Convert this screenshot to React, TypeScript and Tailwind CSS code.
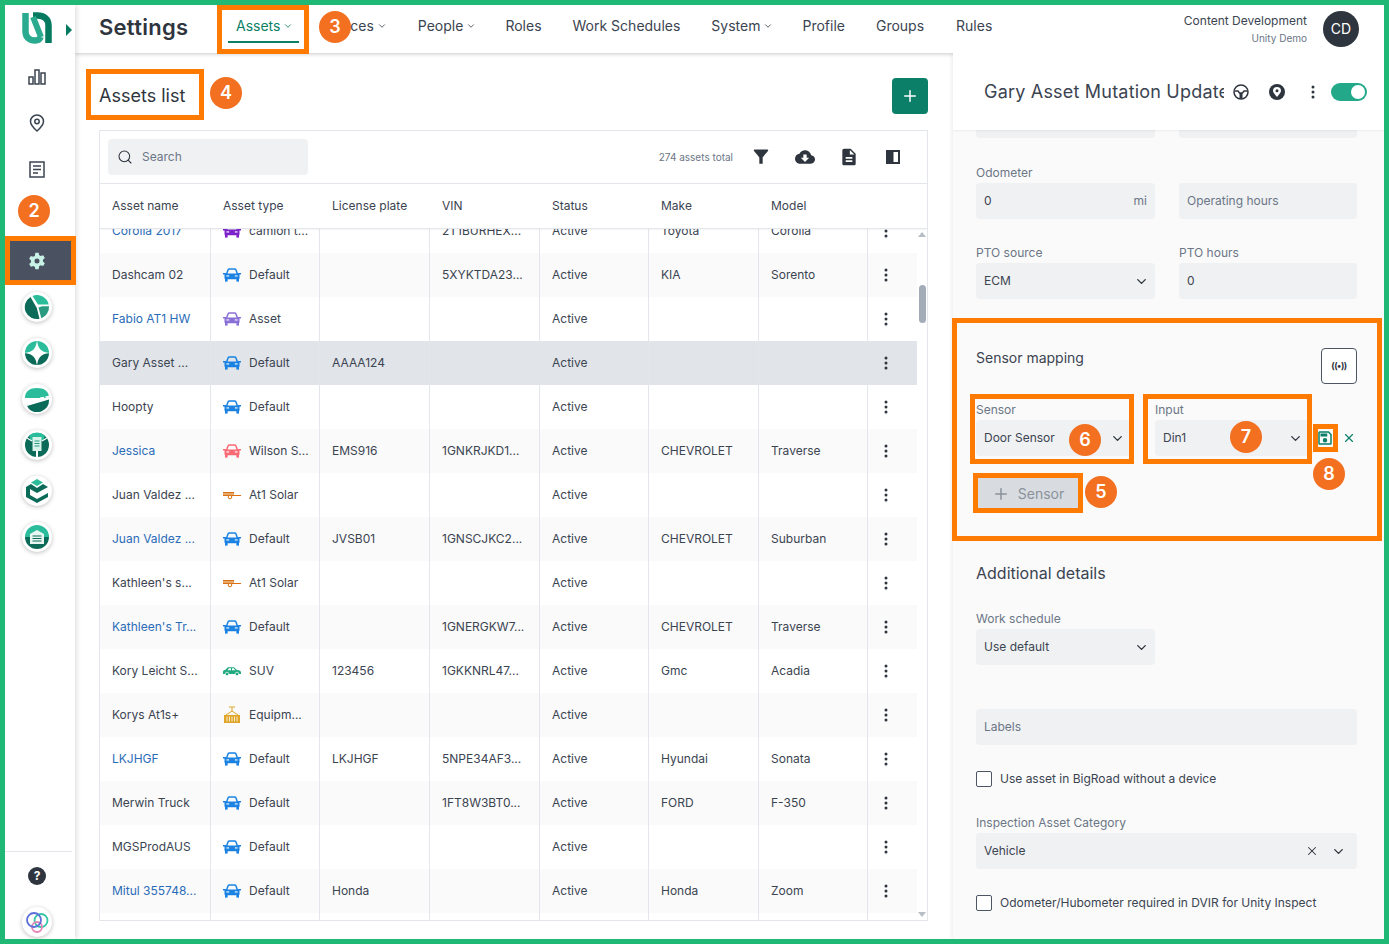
import { ChevronDown, Plus, Search, X } from 'lucide-react'
import type { ReactNode } from 'react'

const light = '#2bbd9b'
const mid = '#2a9a80'
const dark = '#0b6b58'

function Car({ color }: { color: string }) {
  return (
    <svg width="18" height="14" viewBox="0 0 18 14" className="shrink-0">
      <path d="M3.6 6 L5 2 Q5.4 1 6.4 1 H11.6 Q12.6 1 13 2 L14.4 6" fill="none" stroke={color} strokeWidth="1.5" />
      <path d="M0 5h3v1.5H0zM15 5h3v1.5h-3z" fill={color} />
      <rect x="1.5" y="5.6" width="15" height="5.6" rx="1" fill={color} />
      <rect x="2" y="11" width="2.6" height="2.6" fill={color} />
      <rect x="13.4" y="11" width="2.6" height="2.6" fill={color} />
      <rect x="3.4" y="7.4" width="2.8" height="1.1" fill="#fff" />
      <rect x="11.8" y="7.4" width="2.8" height="1.1" fill="#fff" />
    </svg>
  )
}

function Trailer() {
  return (
    <svg width="18" height="14" viewBox="0 0 18 14" className="shrink-0">
      <path d="M0 4h11v4H0zM11 7h7v1h-7z" fill="#d9700f" />
      <rect x="0" y="5.6" width="11" height="0.8" fill="#fff" />
      <circle cx="7" cy="9" r="1.8" fill="#fff" stroke="#d9700f" strokeWidth="1" />
    </svg>
  )
}

function Suv() {
  return (
    <svg width="18" height="14" viewBox="0 0 18 14" className="shrink-0">
      <path d="M0 7.5 Q0 6 2 6 L5 3.2 H11 L14 6 Q18 6.3 18 8.5 V10 H0z" fill="#1fa97f" />
      <path d="M6 4.2h2v2H4.4zM9 4.2h1.6l1.8 2H9z" fill="#fff" />
      <circle cx="4" cy="10" r="1.8" fill="#1fa97f" stroke="#fff" strokeWidth="0.7" />
      <circle cx="14" cy="10" r="1.8" fill="#1fa97f" stroke="#fff" strokeWidth="0.7" />
    </svg>
  )
}

function Container() {
  return (
    <svg width="18" height="18" viewBox="0 0 18 18" className="shrink-0">
      <path d="M6 1h6M9 1v4M9 5 3 9M9 5l6 4" fill="none" stroke="#e0a526" strokeWidth="1" />
      <rect x="1" y="9" width="16" height="8" fill="#e0a526" />
      <path d="M4 10.500v5M6.500 10.500v5M9 10.500v5M11.500 10.500v5M14 10.500v5" stroke="#fff" strokeWidth="0.8" />
    </svg>
  )
}

const icons: Record<string, ReactNode> = {
  blue: <Car color="#1a82e2" />,
  purple: <Car color="#7e22ce" />,
  violet: <Car color="#8a70d6" />,
  red: <Car color="#fb6a75" />,
  trailer: <Trailer />,
  suv: <Suv />,
  box: <Container />,
}

type Row = { name: string; link?: boolean; icon: string; type: string; plate?: string; vin?: string; make?: string; model?: string; selected?: boolean }

const rows: Row[] = [
  { name: 'Corolla 2017', link: true, icon: 'purple', type: 'camion t...', vin: '2T1BURHEX...', make: 'Toyota', model: 'Corolla' },
  { name: 'Dashcam 02', icon: 'blue', type: 'Default', vin: '5XYKTDA23...', make: 'KIA', model: 'Sorento' },
  { name: 'Fabio AT1 HW', link: true, icon: 'violet', type: 'Asset' },
  { name: 'Gary Asset ...', icon: 'blue', type: 'Default', plate: 'AAAA124', selected: true },
  { name: 'Hoopty', icon: 'blue', type: 'Default' },
  { name: 'Jessica', link: true, icon: 'red', type: 'Wilson S...', plate: 'EMS916', vin: '1GNKRJKD1...', make: 'CHEVROLET', model: 'Traverse' },
  { name: 'Juan Valdez ...', icon: 'trailer', type: 'At1 Solar' },
  { name: 'Juan Valdez ...', link: true, icon: 'blue', type: 'Default', plate: 'JVSB01', vin: '1GNSCJKC2...', make: 'CHEVROLET', model: 'Suburban' },
  { name: "Kathleen's s...", icon: 'trailer', type: 'At1 Solar' },
  { name: "Kathleen's Tr...", link: true, icon: 'blue', type: 'Default', vin: '1GNERGKW7...', make: 'CHEVROLET', model: 'Traverse' },
  { name: 'Kory Leicht S...', icon: 'suv', type: 'SUV', plate: '123456', vin: '1GKKNRL47...', make: 'Gmc', model: 'Acadia' },
  { name: 'Korys At1s+', icon: 'box', type: 'Equipm...' },
  { name: 'LKJHGF', link: true, icon: 'blue', type: 'Default', plate: 'LKJHGF', vin: '5NPE34AF3...', make: 'Hyundai', model: 'Sonata' },
  { name: 'Merwin Truck', icon: 'blue', type: 'Default', vin: '1FT8W3BT0...', make: 'FORD', model: 'F-350' },
  { name: 'MGSProdAUS', icon: 'blue', type: 'Default' },
  { name: 'Mitul 355748...', link: true, icon: 'blue', type: 'Default', plate: 'Honda', make: 'Honda', model: 'Zoom' },
]

const gridCols = 'grid grid-cols-[111px_109px_110px_110px_109px_110px_109px_49px]'

function Dots({ className }: { className?: string }) {
  return (
    <svg width="4" height="14" viewBox="0 0 4 14" className={className}>
      <circle cx="2" cy="2" r="1.5" fill="#2f353e" />
      <circle cx="2" cy="7" r="1.5" fill="#2f353e" />
      <circle cx="2" cy="12" r="1.5" fill="#2f353e" />
    </svg>
  )
}

function AppIcon({ children }: { children: ReactNode }) {
  return (
    <div className="w-[30px] h-[30px] rounded-full bg-white shadow-[0_1px_4px_rgba(0,0,0,0.25)] flex items-center justify-center">
      <svg width="26" height="26" viewBox="0 0 26 26">
        {children}
      </svg>
    </div>
  )
}

function NavIcon({ d, active }: { d: ReactNode; active?: boolean }) {
  return (
    <div className={`h-[46px] pr-[6px] flex items-center justify-center ${active ? 'bg-[#4a5160]' : ''}`}>{d}</div>
  )
}

function Sidebar() {
  return (
    <aside className="w-[70px] shrink-0 bg-white flex flex-col z-20 shadow-[2px_0_5px_rgba(0,0,0,0.12)]">
      <div className="h-[49px] pl-[17px] flex items-center">
        <svg width="30" height="32" viewBox="0 0 30 32" className="-mt-[3px]">
          <path d="M3.500 1V19.500C3.500 25.500 8 28.500 13 28.500C16 28.500 18 27 18.500 25" fill="none" stroke="#2aab8f" strokeWidth="6.500" />
          <path d="M11 3.500H15.500C21.500 3.500 26.500 7 26.500 13.500V31" fill="none" stroke="#047a60" strokeWidth="6.500" />
          <path d="M11 5 19 25" fill="none" stroke="#2aab8f" strokeWidth="6" />
        </svg>
        <div className="ml-[14px] w-0 h-0 border-y-[6px] border-y-transparent border-l-[6px] border-l-[#047a60]" />
      </div>
      <NavIcon
        d={
          <svg width="18" height="18" viewBox="0 0 18 18" fill="none" stroke="#3b4451" strokeWidth="1.500">
            <rect x="1" y="9" width="4" height="7" />
            <rect x="7" y="2" width="4" height="14" />
            <rect x="13" y="5" width="4" height="11" />
          </svg>
        }
      />
      <NavIcon
        d={
          <svg width="16" height="18" viewBox="0 0 16 18" fill="none" stroke="#3b4451" strokeWidth="1.500">
            <path d="M8 17C4 13.500 1.500 10.500 1.500 7.500a6.500 6.500 0 0 1 13 0C14.500 10.500 12 13.500 8 17z" />
            <circle cx="8" cy="7.500" r="2.200" />
          </svg>
        }
      />
      <NavIcon
        d={
          <svg width="16" height="17" viewBox="0 0 16 17" fill="none" stroke="#3b4451" strokeWidth="1.500">
            <rect x="1" y="1" width="14" height="15" />
            <path d="M4 5h8M4 8.500h8M4 12h5" />
          </svg>
        }
      />
      <div className="h-[46px]" />
      <NavIcon
        active
        d={
          <svg width="20" height="20" viewBox="0 0 24 24" fill="#c9f2e6">
            <path d="M12 2l2 0 .6 3c.7.2 1.300.6 1.900 1l2.900-1 2 3.400-2.300 2c.1.700.1 1.500 0 2.200l2.300 2-2 3.400-2.900-1c-.6.400-1.200.8-1.900 1L14 22h-4l-.6-3c-.7-.2-1.300-.6-1.900-1l-2.900 1-2-3.400 2.300-2c-.1-.7-.1-1.500 0-2.200l-2.300-2 2-3.400 2.900 1c.6-.4 1.200-.8 1.900-1L10 2zM12 9a3 3 0 1 0 0 6 3 3 0 0 0 0-6z" fillRule="evenodd" />
          </svg>
        }
      />
      <NavIcon
        d={
          <AppIcon>
            <path d="M8.500 1.900A12 12 0 0 1 24.700 10.500H14z" fill={light} />
            <path d="M6.500 2.900 12.800 14 15.500 24.800A12 12 0 0 1 6.500 2.900z" fill={dark} />
            <path d="M25 12.200A12 12 0 0 1 17.300 24.200L14.500 13.500 18 12.200z" fill={mid} />
          </AppIcon>
        }
      />
      <NavIcon
        d={
          <AppIcon>
            <path d="M1 13a12 12 0 0 1 24 0z" fill={light} />
            <path d="M1 13a12 12 0 0 0 24 0z" fill={dark} />
            <path d="M13 0C14 8 16 12 26 13 16 14 14 18 13 26 12 18 10 14 0 13 10 12 12 8 13 0z" fill="#fff" />
          </AppIcon>
        }
      />
      <NavIcon
        d={
          <AppIcon>
            <path d="M1 12C1 5 6 2 13 2s12 3 12 10z" fill={light} />
            <path d="M3 20 25 13.500A12 12 0 0 1 5 23z" fill={dark} />
            <path d="M0 16 26 10.500" stroke="#fff" strokeWidth="2" strokeDasharray="4 1.500" />
          </AppIcon>
        }
      />
      <NavIcon
        d={
          <AppIcon>
            <circle cx="13" cy="13" r="12" fill={dark} />
            <path d="M5 3.500A12 12 0 0 1 21 3.500L19 9H7z" fill={light} />
            <path d="M3 6 8 9M23 6 18 9" stroke="#fff" strokeWidth="1.200" />
            <rect x="8.500" y="5" width="9" height="14" fill="#d7f3ea" />
            <path d="M10.500 9h5M10.500 11.500h5M10.500 14h5" stroke={mid} strokeWidth="1" />
            <path d="M13 19v6" stroke="#fff" strokeWidth="2" />
          </AppIcon>
        }
      />
      <NavIcon
        d={
          <AppIcon>
            <path d="M13 1 19 4.500 13 8 7 4.500z" fill={light} />
            <path d="M7 6 2 9V19L13 25 24 19V15L13 21 6 17V11L13 15 24 9 19 6 13 10z" fill={dark} />
          </AppIcon>
        }
      />
      <NavIcon
        d={
          <AppIcon>
            <path d="M1 13a12 12 0 0 1 24 0z" fill={light} />
            <path d="M1 13a12 12 0 0 0 24 0z" fill={dark} />
            <path d="M6 10 13 6l7 4V20H6z" fill="#e8f6f2" />
            <path d="M8.500 12h9M8.500 14.500h9M8.500 17h9" stroke={dark} strokeWidth="1.200" />
          </AppIcon>
        }
      />
      <div className="mt-auto pb-[2px]">
        <div className="h-px bg-[#e3e6ea] mr-[3px]" />
        <div className="pr-[6px] flex flex-col items-center">
          <div className="mt-[15px] w-[18px] h-[18px] rounded-full bg-[#2f353e] text-white text-xs font-bold leading-[18px] text-center">?</div>
          <div className="mt-[22px]">
            <AppIcon>
              <circle cx="17" cy="11.500" r="6.500" fill="none" stroke="#35c7a8" strokeWidth="1.800" />
              <circle cx="13" cy="18" r="5" fill="none" stroke="#e584b5" strokeWidth="1.800" />
              <circle cx="10" cy="11" r="7" fill="none" stroke="#5a6fd8" strokeWidth="1.800" />
            </AppIcon>
          </div>
        </div>
      </div>
    </aside>
  )
}

function Header() {
  const plain = 'text-sm text-[#3b4451] whitespace-nowrap'
  const chev = <ChevronDown size={10} strokeWidth={2} className="ml-[3px]" />
  return (
    <header className="h-[48px] shrink-0 bg-white flex items-center pl-[24px] pr-[25px] z-10 shadow-[0_1px_4px_rgba(0,0,0,0.22)]">
      <h1 className="w-[129px] text-[22px] tracking-[0.25px] font-semibold text-[#2f353e] leading-none mb-[4px]">Settings</h1>
      <div className="w-[71px] h-[48px] px-2 pt-[12px] relative flex text-sm text-[#0b7f68]">
        <span className="flex items-center h-[18px]">
          Assets
          {chev}
        </span>
        <div className="absolute left-0 right-0 bottom-[10px] h-[2px] bg-[#0b7f68]" />
      </div>
      <nav className="flex items-center mb-[6px]">
        <div className={`ml-[22px] flex items-center ${plain}`}>Devices{chev}</div>
        <div className={`ml-[31px] flex items-center ${plain}`}>People{chev}</div>
        <div className={`ml-[29px] ${plain}`}>Roles</div>
        <div className={`ml-[31px] ${plain}`}>Work Schedules</div>
        <div className={`ml-[31px] flex items-center ${plain}`}>System{chev}</div>
        <div className={`ml-[29px] ${plain}`}>Profile</div>
        <div className={`ml-[31px] ${plain}`}>Groups</div>
        <div className={`ml-[32px] ${plain}`}>Rules</div>
      </nav>
      <div className="ml-auto text-right">
        <div className="text-xs text-[#3b4451] leading-[16px]">Content Development</div>
        <div className="text-[10px] text-[#6b7686] leading-[16px] mt-[1px]">Unity Demo</div>
      </div>
      <div className="ml-4 w-9 h-9 rounded-full bg-[#2f353e] text-white text-sm flex items-center justify-center">CD</div>
    </header>
  )
}

function AssetRow({ row, index }: { row: Row; index: number }) {
  const bg = row.selected ? 'bg-[#e1e5e9]' : index % 2 === 1 ? 'bg-[#fafafa]' : 'bg-white'
  const line = 'border-r border-[#e3e6ea] pl-3 flex items-center whitespace-nowrap overflow-hidden'
  return (
    <div className={`${gridCols} h-11 text-xs text-[#3b4451] ${bg}`}>
      <div className={`${line} ${row.link ? 'text-[#2b6cb8]' : ''}`}>{row.name}</div>
      <div className={`${line} gap-2`}>
        {icons[row.icon]}
        <span>{row.type}</span>
      </div>
      <div className={line}>{row.plate}</div>
      <div className={line}>{row.vin}</div>
      <div className={line}>Active</div>
      <div className={line}>{row.make}</div>
      <div className={line}>{row.model}</div>
      <div className="flex items-center pl-4">
        <Dots />
      </div>
    </div>
  )
}

function AssetsTable() {
  const headers = ['Asset name', 'Asset type', 'License plate', 'VIN', 'Status', 'Make', 'Model', '']
  return (
    <div className="h-[791px] border border-[#e3e6ea] flex flex-col overflow-hidden">
      <div className="h-[53px] shrink-0 border-b border-[#e3e6ea] pl-2 pr-6 flex items-center">
        <div className="w-[200px] h-9 rounded bg-[#f0f1f3] flex items-center pl-[9px] gap-[9px] text-xs text-[#6b7686]">
          <Search size={16} strokeWidth={1.6} className="text-[#2f353e]" />
          Search
        </div>
        <span className="ml-auto text-[10px] text-[#6b7686]">274 assets total</span>
        <svg width="20" height="20" viewBox="0 0 24 24" fill="#2f353e" className="ml-[18px]">
          <path d="M3.500 4.500C5.500 7 10 12.500 10 12.500V20h4v-7.500s4.500-5.500 6.500-8c.4-.6 0-1.500-.8-1.500H4.300c-.8 0-1.200.9-.8 1.500z" />
        </svg>
        <svg width="20" height="20" viewBox="0 0 24 24" fill="#2f353e" className="ml-6">
          <path d="M19.350 10.040C18.670 6.590 15.640 4 12 4 9.110 4 6.600 5.640 5.350 8.040 2.340 8.360 0 10.910 0 14c0 3.310 2.690 6 6 6h13c2.760 0 5-2.240 5-5 0-2.640-2.050-4.780-4.650-4.960zM17 13l-5 5-5-5h3V9h4v4h3z" />
        </svg>
        <svg width="20" height="20" viewBox="0 0 24 24" fill="#2f353e" className="ml-6">
          <path d="M14 2H6c-1.100 0-1.990.9-1.990 2L4 20c0 1.100.89 2 1.990 2H18c1.100 0 2-.9 2-2V8l-6-6zm2 16H8v-2h8v2zm0-4H8v-2h8v2zm-3-5V3.500L18.500 9H13z" />
        </svg>
        <svg width="20" height="20" viewBox="0 0 20 20" className="ml-6">
          <path d="M3 3h14v14H3zM10.500 5v10H15V5z" fill="#2f353e" fillRule="evenodd" />
        </svg>
      </div>
      <div className="h-[45px] shrink-0 border-b border-[#e3e6ea] bg-white z-10 shadow-[0_1px_2px_rgba(0,0,0,0.05)]">
        <div className={`${gridCols} h-full text-xs text-[#3b4451] pb-[1px]`}>
          {headers.map((h) => (
            <div key={h} className="pl-3 flex items-center">
              {h}
            </div>
          ))}
        </div>
      </div>
      <div className="flex-1 min-h-0 flex overflow-hidden">
        <div className="w-[817px] shrink-0 overflow-hidden">
          <div className="-mt-[20px]">
            {rows.map((row, i) => (
              <AssetRow key={i} row={row} index={i} />
            ))}
            <div className={`${gridCols} h-11`}>
              {[0, 1, 2, 3, 4, 5, 6].map((c) => (
                <div key={c} className="border-r border-[#e3e6ea]" />
              ))}
            </div>
          </div>
        </div>
        <div className="w-[10px] shrink-0 flex flex-col items-center relative">
          <div className="mt-[3px] w-0 h-0 border-x-[4px] border-x-transparent border-b-[5px] border-b-[#b8bec6]" />
          <div className="mt-[48px] w-[7px] h-[38px] rounded bg-[#a3adb8]" />
          <div className="mt-auto mb-[3px] w-0 h-0 border-x-[4px] border-x-transparent border-t-[5px] border-t-[#b8bec6]" />
        </div>
      </div>
    </div>
  )
}

function Main() {
  return (
    <main className="flex-1 min-w-0 bg-white pl-[24px] pr-[25px]">
      <div className="pt-[25px] flex justify-between items-start mb-[16px]">
        <h2 className="text-lg text-[#2f353e] leading-[36px]">Assets list</h2>
        <button className="w-9 h-9 rounded-sm bg-[#0b7f68] text-white flex items-center justify-center">
          <Plus size={18} strokeWidth={2} />
        </button>
      </div>
      <AssetsTable />
    </main>
  )
}

function Label({ children }: { children: ReactNode }) {
  return <div className="h-[18px] text-xs leading-[15px] text-[#6b7686]">{children}</div>
}

function Field({ children, muted, className }: { children?: ReactNode; muted?: boolean; className?: string }) {
  return (
    <div className={`h-9 rounded bg-[#f0f1f3] pl-2 pr-2 flex items-center justify-between text-xs ${muted ? 'text-[#6b7686]' : 'text-[#3b4451]'} ${className ?? ''}`}>
      {children}
    </div>
  )
}

function Select({ value }: { value: string }) {
  return (
    <div className="h-9 rounded bg-[#f0f1f3] pl-2 pr-[6px] flex items-center justify-between text-xs text-[#3b4451]">
      <span>{value}</span>
      <ChevronDown size={15} strokeWidth={2.2} className="text-[#2f353e]" />
    </div>
  )
}

function Check({ text, className }: { text: string; className?: string }) {
  return (
    <div className={`flex items-center gap-2 h-4 text-xs text-[#3b4451] ${className ?? ''}`}>
      <div className="w-4 h-4 border border-[#4b5563] rounded-[2px] bg-white" />
      {text}
    </div>
  )
}

function DetailPanel() {
  return (
    <section className="w-[431px] shrink-0 flex flex-col bg-[#fafafa] shadow-[-2px_0_3px_rgba(0,0,0,0.06)] overflow-hidden">
      <div className="h-[77px] shrink-0 bg-white pl-[31px] flex items-center z-10 shadow-[0_1px_2px_rgba(0,0,0,0.06)]">
        <div className="w-[240px] overflow-hidden whitespace-nowrap text-lg tracking-[0.2px] text-[#3b4451]">Gary Asset Mutation Update</div>
        <svg width="16" height="16" viewBox="0 0 16 16" fill="none" stroke="#2f353e" strokeWidth="1.500" className="ml-[9px]">
          <circle cx="8" cy="8" r="7" />
          <path d="M1.500 7 H5 L6.500 9 H9.500 L11 7 H14.500" />
          <path d="M6.500 9h3v5.500h-3z" fill="#2f353e" stroke="none" />
        </svg>
        <div className="ml-[20px] w-4 h-4 rounded-full bg-[#2f353e] flex items-center justify-center">
          <svg width="8" height="10" viewBox="0 0 8 10">
            <path d="M4 10C1.500 7 0 5.500 0 3.800a4 3.800 0 0 1 8 0C8 5.500 6.500 7 4 10z" fill="#fff" />
            <circle cx="4" cy="3.800" r="1.500" fill="#2f353e" />
          </svg>
        </div>
        <Dots className="ml-[26px]" />
        <div className="ml-4 w-9 h-[18px] rounded-full bg-[#23a98a] flex items-center justify-end pr-[2px]">
          <div className="w-[14px] h-[14px] rounded-full bg-white" />
        </div>
      </div>
      <div className="flex-1 min-h-0 overflow-hidden pl-[23px] pr-[27px]">
        <div className="grid grid-cols-[179px_178px] gap-x-6">
          <div className="h-2 rounded-b bg-[#f0f1f3]" />
          <div className="h-2 rounded-b bg-[#f0f1f3]" />
          <div className="mt-[27px]">
            <Label>Odometer</Label>
            <Field>
              <span>0</span>
              <span className="text-[#6b7686]">mi</span>
            </Field>
          </div>
          <div className="mt-[27px]">
            <div className="h-[18px]" />
            <Field muted>Operating hours</Field>
          </div>
          <div className="mt-[26px]">
            <Label>PTO source</Label>
            <Select value="ECM" />
          </div>
          <div className="mt-[26px]">
            <Label>PTO hours</Label>
            <Field>0</Field>
          </div>
        </div>
        <div className="mt-[23px] h-px bg-[#e3e6ea]" />
        <div className="mt-[25px] flex justify-between items-start">
          <div className="text-sm leading-[20px] text-[#3b4451]">Sensor mapping</div>
          <button className="w-9 h-9 rounded border border-[#4b5563] bg-white flex items-center justify-center text-[#2f353e] text-[9px] font-bold tracking-tighter">
            ((•))
          </button>
        </div>
        <div className="mt-[18px] flex items-end">
          <div className="w-[155px]">
            <Label>Sensor</Label>
            <Select value="Door Sensor" />
          </div>
          <div className="ml-6 w-[154px]">
            <Label>Input</Label>
            <Select value="Din1" />
          </div>
          <div className="h-9 flex items-center ml-[7px] gap-2">
            <svg width="18" height="18" viewBox="0 0 24 24" fill="#0b7f68">
              <path d="M17 3H5a2 2 0 0 0-2 2v14a2 2 0 0 0 2 2h14a2 2 0 0 0 2-2V7l-4-4m2 16H5V5h11.170L19 7.830V19m-7-7a3 3 0 0 0-3 3 3 3 0 0 0 3 3 3 3 0 0 0 3-3 3 3 0 0 0-3-3M6 6h9v4H6V6z" />
            </svg>
            <X size={14} strokeWidth={2} className="text-[#0b7f68]" />
          </div>
        </div>
        <button className="mt-[22px] ml-[2px] w-[100px] h-[30px] pt-[1px] bg-[#d8dce0] text-[#8a929c] text-sm flex items-center justify-center gap-2">
          <Plus size={18} strokeWidth={2} />
          Sensor
        </button>
        <div className="mt-[53px] text-base leading-6 text-[#3b4451]">Additional details</div>
        <div className="mt-[26px] w-[179px]">
          <Label>Work schedule</Label>
          <Select value="Use default" />
        </div>
        <Field muted className="mt-[44px]">
          Labels
        </Field>
        <Check text="Use asset in BigRoad without a device" className="mt-[26px]" />
        <div className="mt-[28px]">
          <Label>Inspection Asset Category</Label>
          <Field>
            <span>Vehicle</span>
            <span className="flex items-center gap-3 mr-[3px] text-[#2f353e]">
              <X size={14} strokeWidth={1.8} />
              <ChevronDown size={15} strokeWidth={2.2} />
            </span>
          </Field>
        </div>
        <Check text="Odometer/Hubometer required in DVIR for Unity Inspect" className="mt-[26px]" />
      </div>
    </section>
  )
}

function Box({ className }: { className: string }) {
  return <div className={`absolute border-[5px] border-[#ff7a00] pointer-events-none z-30 ${className}`} />
}

function Badge({ n, className }: { n: number; className: string }) {
  return (
    <div className={`absolute w-8 h-8 rounded-full bg-[#f37021] text-white text-lg font-semibold flex items-center justify-center z-40 ${className}`}>
      {n}
    </div>
  )
}

export default function App() {
  return (
    <div className="relative w-[1389px] h-screen box-border border-[5px] border-[#1fb874] flex overflow-hidden text-[#3b4451] [font-family:Inter,sans-serif]">
      <Sidebar />
      <div className="flex-1 min-w-0 flex flex-col">
        <Header />
        <div className="flex-1 min-h-0 flex">
          <Main />
          <DetailPanel />
        </div>
      </div>

      {/* annotations, offsets are from the inside of the green frame */}
      <Box className="left-0 top-[231px] w-[71px] h-[49px]" />
      <Box className="left-[212px] top-0 w-[92px] h-[49px]" />
      <Box className="left-[81px] top-[64px] w-[118px] h-[51px]" />
      <Box className="left-[947px] top-[313px] w-[430px] h-[223px]" />
      <Box className="left-[965px] top-[389px] w-[164px] h-[70px]" />
      <Box className="left-[1138px] top-[389px] w-[169px] h-[70px]" />
      <Box className="left-[1308px] top-[419px] w-[25px] h-[28px]" />
      <Box className="left-[968px] top-[468px] w-[110px] h-[40px]" />
      <Badge n={2} className="left-[13px] top-[190px]" />
      <Badge n={3} className="left-[314px] top-[6px]" />
      <Badge n={4} className="left-[205px] top-[72px]" />
      <Badge n={5} className="left-[1080px] top-[471px]" />
      <Badge n={6} className="left-[1064px] top-[419px]" />
      <Badge n={7} className="left-[1225px] top-[416px]" />
      <Badge n={8} className="left-[1308px] top-[453px]" />
    </div>
  )
}
